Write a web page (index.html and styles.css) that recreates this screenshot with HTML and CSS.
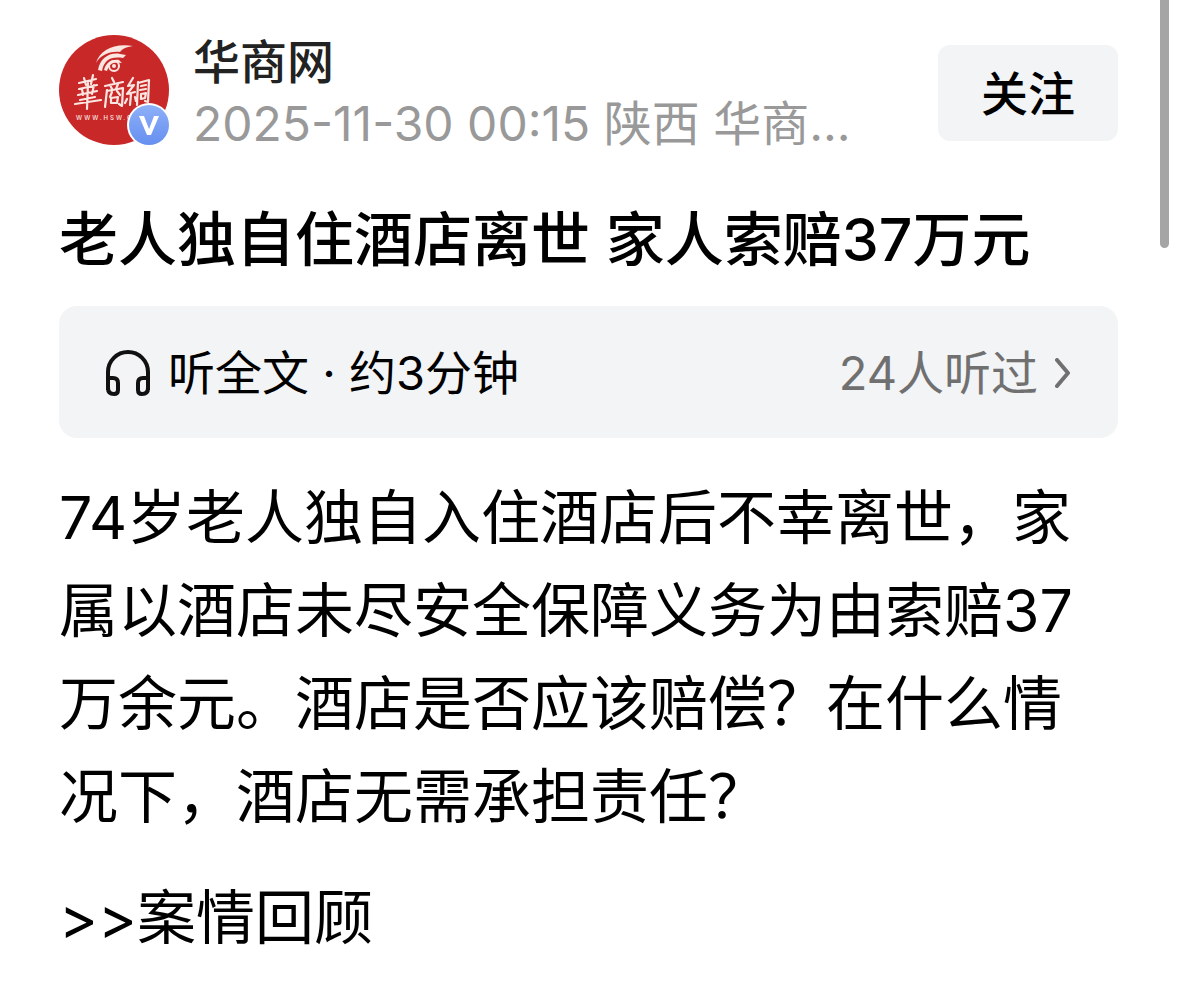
FILE: index.html
```html
<!DOCTYPE html>
<html lang="zh-CN">
<head>
<meta charset="utf-8">
<meta name="viewport" content="width=device-width, initial-scale=1">
<title>老人独自住酒店离世 家人索赔37万元</title>
<link rel="stylesheet" href="styles.css">
</head>
<body>
<main class="page">
  <header class="author">
    <a class="avatar" href="#" aria-label="华商网">
      <svg class="logo" viewBox="0 0 110 110" aria-hidden="true">
        <circle cx="55" cy="55" r="55" fill="#c92828"/>
        <g fill="#fbe6e2">
          <path d="M37 28C41 15 55 8 74 11C67 12 63 14 61 17C50 16 42 20 37 28Z"/>
          <path d="M39 35C41 23 51 17 61 19L67 20L64 23C52 21 45 25 43 36Z"/>
          <path d="M45 35C47 27 53 24 60 25L63 28C54 26 50 29 48 36Z"/>
        </g>
        <circle cx="55" cy="31" r="5" fill="none" stroke="#fbe6e2" stroke-width="2"/>
        <circle cx="55" cy="31" r="2" fill="#fbe6e2"/>
        <g fill="none" stroke="#fbe6e2" stroke-width="2.2" stroke-linecap="round" stroke-linejoin="round">
          <path d="M20 48L37 44M25 43L27 50M34 40L32 49M20 54L38 50M23 54L24 60M29 48L28 74M35 50L33 59M19 60L38 56M21 65L36 62M16 69L42 65"/>
          <path d="M53 43L55 47M46 51L64 47M51 50L53 54M59 49L57 54M48 55L46 72M48 56L64 53L63 71L60 69M53 57L51 62M58 56L61 60M52 63L59 62L58 68L52 68Z"/>
          <path d="M74 43L69 51L75 50L68 59L76 57M72 59L71 70M68 64L66 68M76 62L77 66M79 47L78 70M79 48L90 45L89 67L86 66M82 51L87 50M81 55L87 54M82 59L87 58L86 63L82 64Z"/>
        </g>
        <text class="logo-url" x="17" y="85">WWW.HSW.CN</text>
      </svg>
      <svg class="badge" viewBox="0 0 44 44" aria-hidden="true">
        <defs>
          <linearGradient id="blue" x1="0" y1="0" x2="0" y2="1">
            <stop offset="0" stop-color="#8db0f8"/>
            <stop offset="1" stop-color="#668ff0"/>
          </linearGradient>
        </defs>
        <circle cx="22" cy="22" r="22" fill="#fff"/>
        <circle cx="22" cy="22" r="20" fill="url(#blue)"/>
        <path d="M12 13H17L22 26L27 13H32L24 32H20Z" fill="#fff"/>
      </svg>
    </a>
    <div class="info">
      <a class="name" href="#">华商网</a>
      <p class="meta">2025-11-30 00:15 陕西 华商...</p>
    </div>
    <button class="follow" type="button">关注</button>
  </header>

  <article>
    <h1 class="title">老人独自住酒店离世 家人索赔37万元</h1>
    <button class="listen" type="button">
      <svg class="headphones" viewBox="0 0 46 46" aria-hidden="true">
        <path d="M3 40V22A20 20 0 0 1 43 22V40M3 28H8Q13 28 13 33V40Q13 44 9 44Q3 44 3 38M43 28H38Q33 28 33 33V40Q33 44 37 44Q43 44 43 38"/>
      </svg>
      <span class="listen-label">听全文 · 约3分钟</span>
      <span class="listen-count">24人听过</span>
      <svg class="chevron" viewBox="0 0 16 30" aria-hidden="true"><path d="M2 2L13 15L2 28"/></svg>
    </button>
    <div class="body">
      <p>74岁老人独自入住酒店后不幸离世，家属以酒店未尽安全保障义务为由索赔37万余元。酒店是否应该赔偿？在什么情况下，酒店无需承担责任？</p>
      <p>&gt;&gt;案情回顾</p>
    </div>
  </article>
</main>
<div class="scroll-thumb" aria-hidden="true"></div>
</body>
</html>
```
FILE: styles.css
```css
* { box-sizing: border-box; }

body {
  margin: 0;
  background: #fff;
  color: #000;
  font-family: Inter, "Noto Sans CJK SC", sans-serif;
}

p, h1 { margin: 0; }
a { color: inherit; text-decoration: none; }

button {
  border: 0;
  color: inherit;
  font-family: inherit;
  cursor: pointer;
}

.page { padding: 35px 60px 24px 59px; }

.author {
  display: flex;
  align-items: flex-start;
  gap: 24px;
}

.avatar {
  position: relative;
  flex: none;
  width: 110px;
  height: 110px;
}

.logo { display: block; width: 100%; }

.logo-url {
  fill: #fbe6e2;
  font-size: 6px;
  font-weight: 500;
  letter-spacing: 2px;
}

.badge {
  position: absolute;
  right: -2px;
  bottom: -2px;
  width: 44px;
}

.info {
  flex: 1;
  min-width: 0;
}

.name {
  display: block;
  color: #222;
  font-size: 47px;
  font-weight: 500;
  line-height: 54px;
}

.meta {
  color: #999;
  font-size: 48px;
  line-height: 70px;
  white-space: nowrap;
}

.follow {
  flex: none;
  width: 180px;
  height: 96px;
  margin-top: 10px;
  padding: 0 0 6px;
  border-radius: 12px;
  background: #f3f4f6;
  font-size: 47px;
  font-weight: 500;
}

.title {
  margin-top: 36px;
  font-size: 59px;
  font-weight: 500;
  line-height: 90px;
}

.listen {
  display: flex;
  align-items: center;
  width: 100%;
  margin-top: 21px;
  padding: 33px 47px 31px 46px;
  border-radius: 18px;
  background: #f3f4f6;
  font-size: 47px;
  line-height: 68px;
  text-align: left;
}

.headphones {
  width: 46px;
  margin-right: 17px;
  fill: none;
  stroke: #111;
  stroke-width: 4;
  stroke-linejoin: round;
}

.listen-label { flex: 1; }
.listen-count { color: #707070; }

.chevron {
  width: 16px;
  margin-left: 17px;
  fill: none;
  stroke: #707070;
  stroke-width: 4;
  stroke-linecap: round;
  stroke-linejoin: round;
}

.body {
  display: grid;
  gap: 28px;
  margin-top: 33px;
  font-size: 59px;
  line-height: 93px;
}

.scroll-thumb {
  position: fixed;
  top: 0;
  right: 9px;
  width: 9px;
  height: 248px;
  border-radius: 0 0 5px 5px;
  background: #a5a5a5;
}
```
